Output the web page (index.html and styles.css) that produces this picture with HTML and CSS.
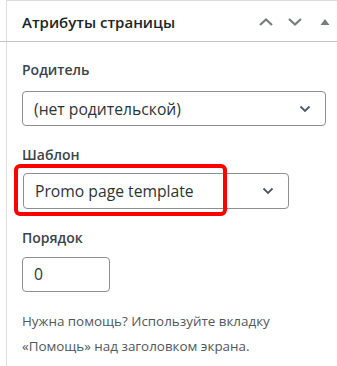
FILE: index.html
```html
<!DOCTYPE html>
<html lang="ru">
<head>
  <meta charset="UTF-8" />
  <title>Атрибуты страницы</title>
  <link rel="stylesheet" href="styles.css">
</head>
<body>
  <div class="postbox">
    <div class="postbox-header">
      <h2>Атрибуты страницы</h2>
      <div class="handle-actions">
        <svg class="handle" width="16" height="10" viewBox="0 0 16 10"><path d="M2 8 L8 2.5 L14 8" fill="none" stroke="currentColor" stroke-width="2.2"/></svg>
        <svg class="handle" width="16" height="10" viewBox="0 0 16 10"><path d="M2 2 L8 7.5 L14 2" fill="none" stroke="currentColor" stroke-width="2.2"/></svg>
        <svg class="handle toggle" width="10" height="8" viewBox="0 0 10 8"><path d="M5 1 L9.5 7 L0.5 7 Z" fill="currentColor"/></svg>
      </div>
    </div>
    <div class="inside">
      <p class="label">Родитель</p>
      <div class="select wide">
        <span>(нет родительской)</span>
        <svg class="chev" width="12" height="8" viewBox="0 0 12 8"><path d="M1.5 1.5 L6 6 L10.5 1.5" fill="none" stroke="currentColor" stroke-width="1.8"/></svg>
      </div>

      <p class="label">Шаблон</p>
      <div class="field">
        <div class="select template">
          <span>Promo page template</span>
          <svg class="chev" width="12" height="8" viewBox="0 0 12 8"><path d="M1.5 1.5 L6 6 L10.5 1.5" fill="none" stroke="currentColor" stroke-width="1.8"/></svg>
        </div>
        <div class="highlight"></div>
      </div>

      <p class="label">Порядок</p>
      <div class="number">0</div>

      <p class="help">Нужна помощь? Используйте вкладку<br>«Помощь» над заголовком экрана.</p>
    </div>
  </div>
</body>
</html>
```

FILE: styles.css
```css
body {
  margin: 0;
  background: #fff;
  font-family: 'Open Sans', 'Noto Sans', sans-serif;
  color: #1d2327;
}
.postbox {
  margin-left: 6px;
  border-left: 1px solid #dcdcde;
  border-top: 1px solid #dcdcde;
  height: 366px;
  box-sizing: border-box;
}
.postbox-header {
  display: flex;
  align-items: center;
  justify-content: space-between;
  height: 41px;
  border-bottom: 1px solid #c3c4c7;
  margin-left: -7px;
  padding-left: 22px;
  padding-top: 2px;
  box-sizing: border-box;
}
.postbox-header h2 {
  margin: 0;
  font-size: 15px;
  font-weight: 600;
  color: #1d2327;
}
.handle-actions {
  display: flex;
  align-items: center;
  gap: 13px;
  color: #787c82;
  padding-right: 7px;
}
.toggle {
  margin-left: 4px;
}
.inside {
  padding: 18px 11px 0 15px;
}
.label {
  margin: 0;
  font-size: 14px;
  font-weight: 600;
  color: #3c434a;
  line-height: 20px;
}
.select {
  display: flex;
  align-items: center;
  justify-content: space-between;
  box-sizing: border-box;
  border: 1px solid #8c8f94;
  border-radius: 4px;
  font-size: 15.7px;
  color: #2c3338;
  padding: 0 14px 0 11px;
}
.select.wide {
  height: 35px;
  margin: 11px 0 19px;
}
.field {
  position: relative;
  margin: 8px 0 19px 1px;
}
.select.template {
  width: 266px;
  height: 36px;
}
/* red annotation frame drawn over the template select */
.highlight {
  position: absolute;
  left: -9px;
  top: -9px;
  width: 213px;
  height: 52px;
  box-sizing: border-box;
  border: 4px solid #f00;
  border-radius: 6px;
}
.chev {
  color: #50575e;
}
.number {
  box-sizing: border-box;
  width: 88px;
  height: 35px;
  margin-top: 9px;
  border: 1px solid #8c8f94;
  border-radius: 4px;
  font-size: 15.7px;
  color: #2c3338;
  line-height: 33px;
  padding-left: 11px;
}
.help {
  margin: 17px 0 0;
  font-size: 13.4px;
  line-height: 25px;
  color: #50575e;
}
```
